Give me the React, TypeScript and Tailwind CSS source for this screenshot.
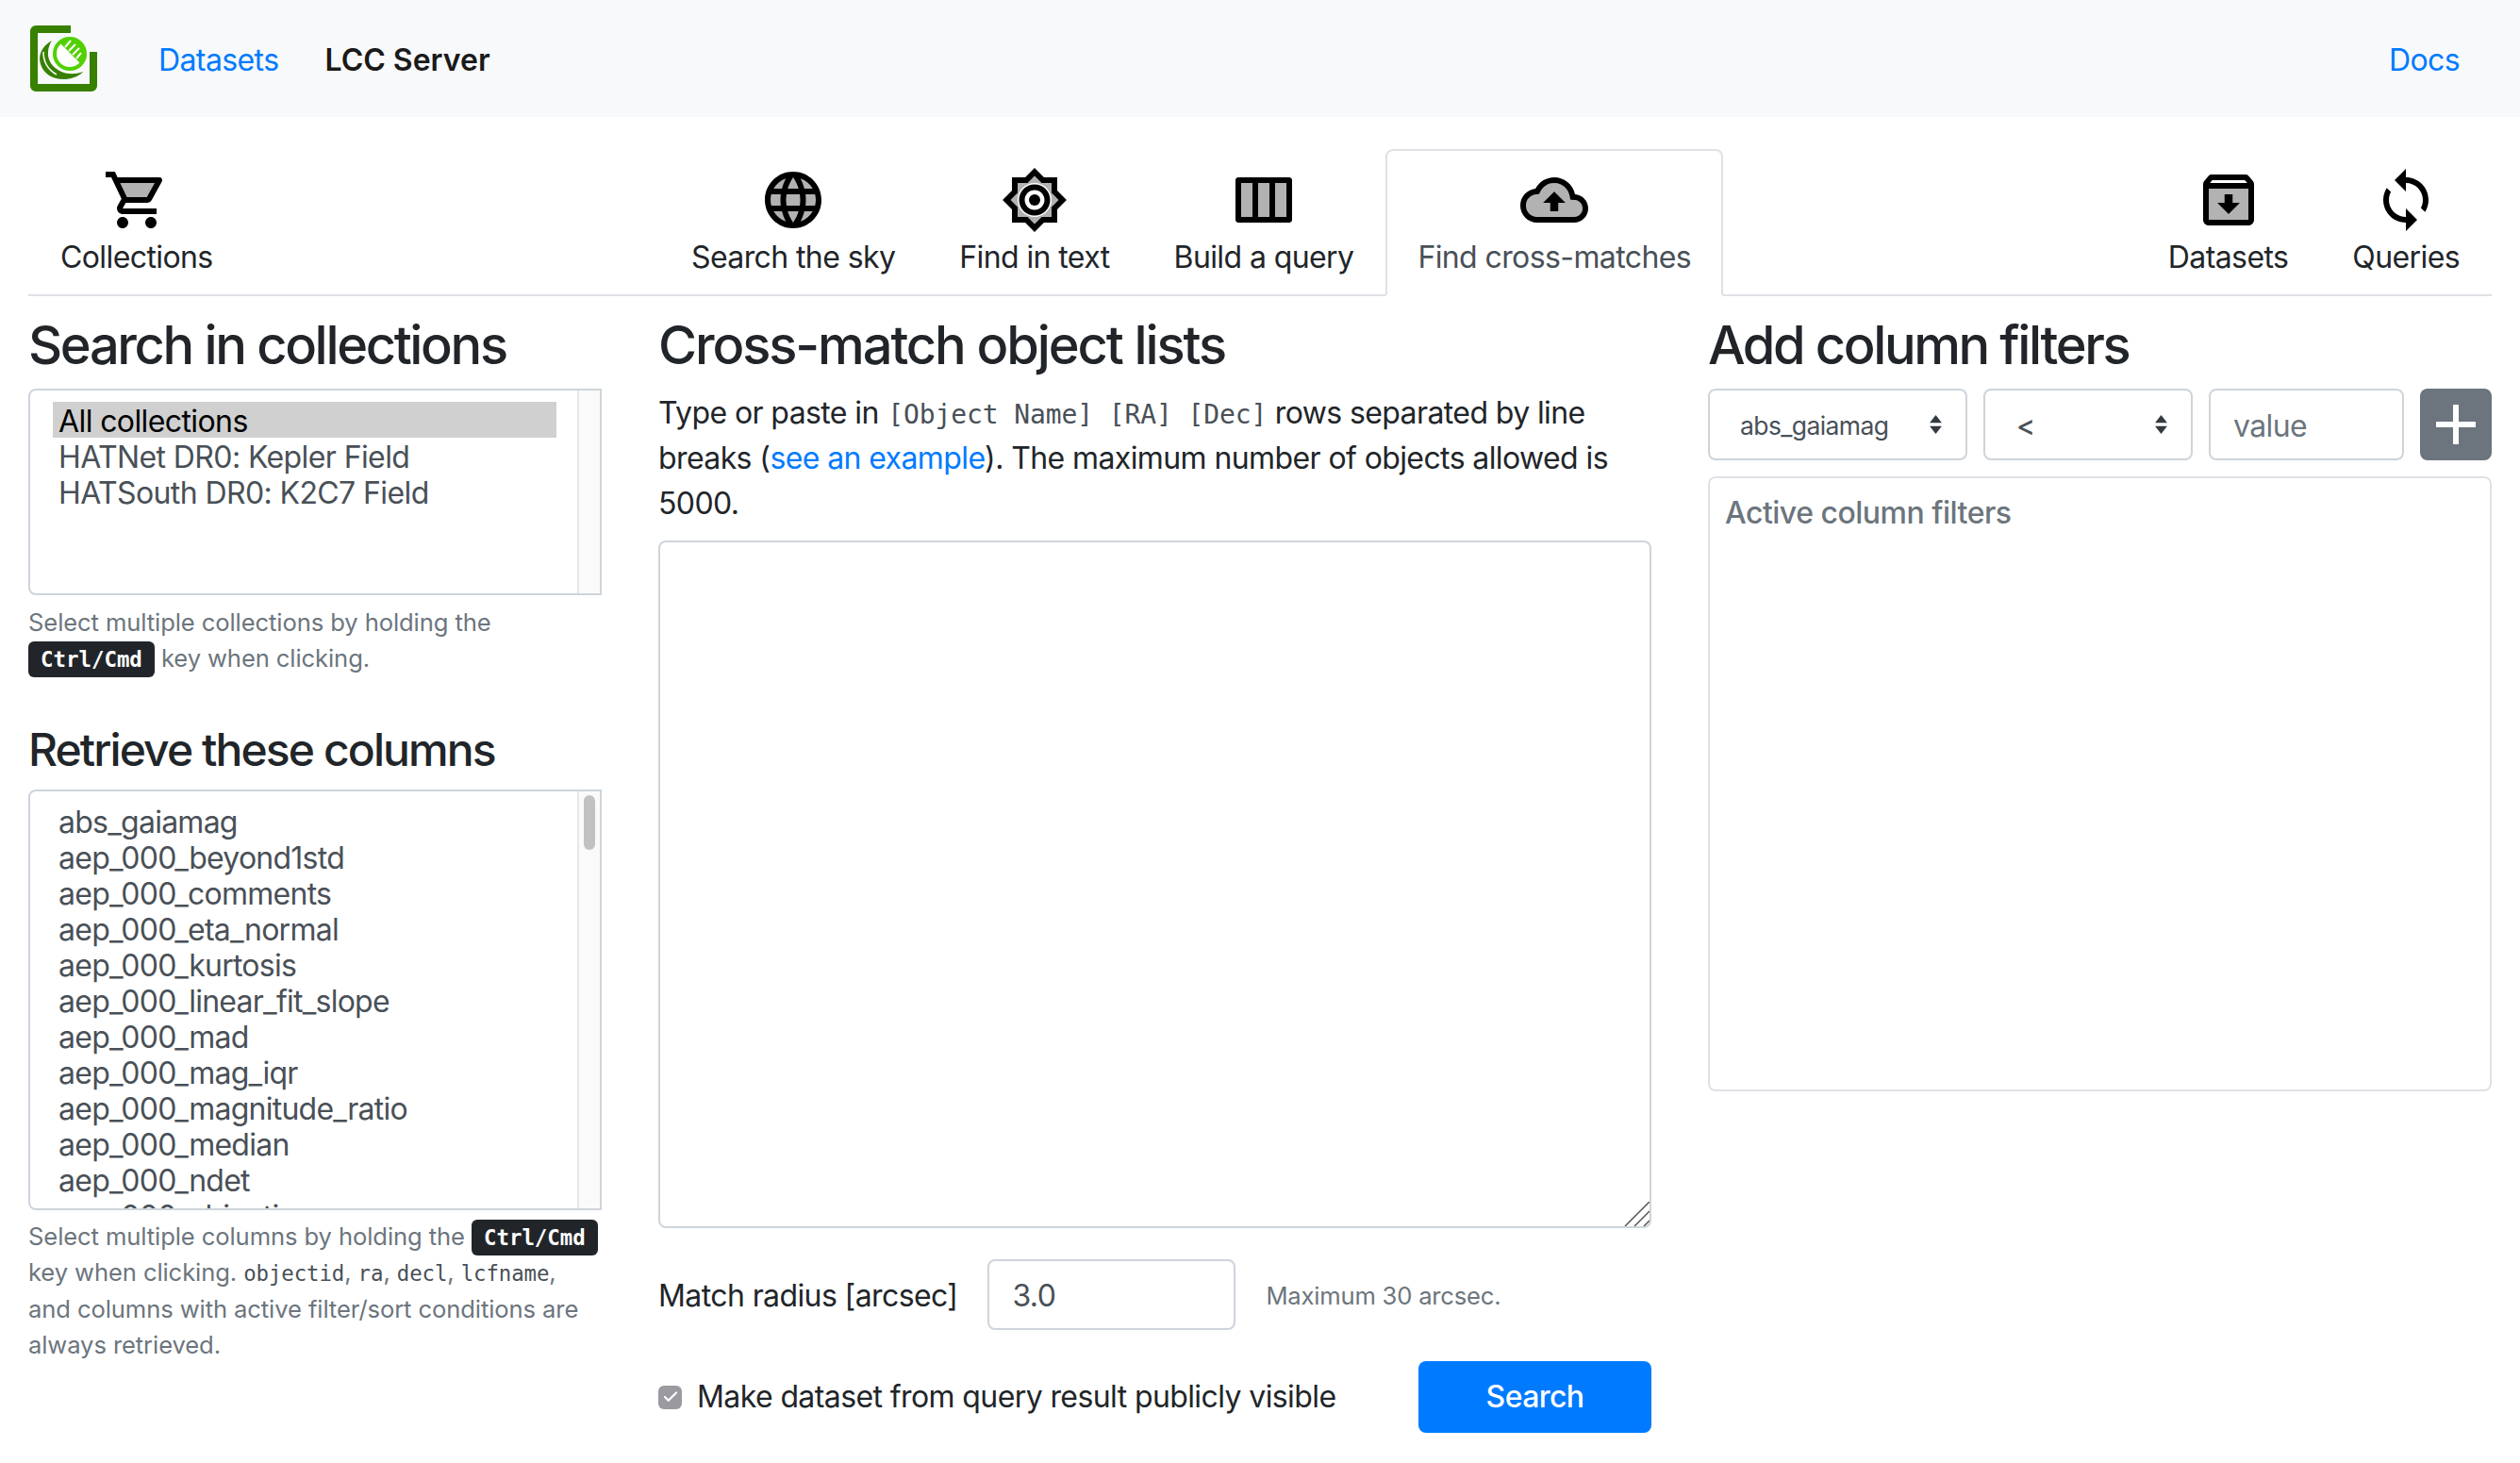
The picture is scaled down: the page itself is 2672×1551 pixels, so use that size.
import { Check } from 'lucide-react';
import type { ReactNode } from 'react';

const columns = [
  'abs_gaiamag',
  'aep_000_beyond1std',
  'aep_000_comments',
  'aep_000_eta_normal',
  'aep_000_kurtosis',
  'aep_000_linear_fit_slope',
  'aep_000_mad',
  'aep_000_mag_iqr',
  'aep_000_magnitude_ratio',
  'aep_000_median',
  'aep_000_ndet',
  'aep_000_objective',
];

function Icon({ children }: { children: ReactNode }) {
  return (
    <svg viewBox="0 0 24 24" className="w-[72px] h-[72px] mx-auto" fill="#000">
      {children}
    </svg>
  );
}

const CartIcon = (
  <Icon>
    <path d="M15.55 11l2.76-5H6.16l2.37 5z" opacity=".3" />
    <path d="M15.55 13c.75 0 1.41-.41 1.75-1.03l3.58-6.49A.996.996 0 0020.01 4H5.21l-.94-2H1v2h2l3.6 7.59-1.35 2.44C4.52 15.37 5.48 17 7 17h12v-2H7l1.1-2h7.45zM6.16 6h12.15l-2.76 5H8.53L6.16 6zM7 18c-1.1 0-1.99.9-1.99 2S5.9 22 7 22s2-.9 2-2-.9-2-2-2zm10 0c-1.1 0-1.99.9-1.99 2s.89 2 1.99 2 2-.9 2-2-.9-2-2-2z" />
  </Icon>
);

const GlobeIcon = (
  <Icon>
    <circle cx="12" cy="12" r="9" opacity=".3" />
    <path d="M11.99 2C6.47 2 2 6.48 2 12s4.47 10 9.99 10C17.52 22 22 17.52 22 12S17.52 2 11.99 2zm6.93 6h-2.95c-.32-1.25-.78-2.45-1.38-3.56 1.84.63 3.37 1.91 4.33 3.56zM12 4.04c.83 1.2 1.48 2.53 1.91 3.96h-3.82c.43-1.43 1.08-2.76 1.91-3.96zM4.26 14C4.1 13.36 4 12.69 4 12s.1-1.36.26-2h3.38c-.08.66-.14 1.32-.14 2 0 .68.06 1.34.14 2H4.26zm.82 2h2.95c.32 1.25.78 2.45 1.38 3.56-1.84-.63-3.37-1.9-4.33-3.56zm2.95-8H5.08c.96-1.66 2.49-2.93 4.33-3.56C8.81 5.55 8.35 6.75 8.03 8zM12 19.96c-.83-1.2-1.48-2.53-1.91-3.96h3.82c-.43 1.43-1.08 2.76-1.91 3.96zM14.34 14H9.66c-.09-.66-.16-1.32-.16-2 0-.68.07-1.35.16-2h4.68c.09.65.16 1.32.16 2 0 .68-.07 1.34-.16 2zm.25 5.56c.6-1.11 1.06-2.31 1.38-3.56h2.95c-.96 1.65-2.49 2.93-4.33 3.56zM16.36 14c.08-.66.14-1.32.14-2 0-.68-.06-1.34-.14-2h3.38c.16.64.26 1.31.26 2s-.1 1.36-.26 2h-3.38z" />
  </Icon>
);

const BrightnessIcon = (
  <Icon>
    <path
      d="M18 9.52V6h-3.52L12 3.52 9.52 6H6v3.52L3.52 12 6 14.48V18h3.52L12 20.48 14.48 18H18v-3.48L20.48 12 18 9.52zM12 18c-3.31 0-6-2.69-6-6s2.69-6 6-6 6 2.69 6 6-2.69 6-6 6z"
      opacity=".3"
    />
    <path d="M20 8.69V4h-4.69L12 .69 8.69 4H4v4.69L.69 12 4 15.31V20h4.69L12 23.31 15.31 20H20v-4.69L23.31 12 20 8.69zm-2 5.79V18h-3.52L12 20.48 9.52 18H6v-3.52L3.52 12 6 9.52V6h3.52L12 3.52 14.48 6H18v3.52L20.48 12 18 14.48zM12 6.5c-3.03 0-5.5 2.47-5.5 5.5s2.47 5.5 5.5 5.5 5.5-2.47 5.5-5.5-2.47-5.5-5.5-5.5zm0 9c-1.93 0-3.5-1.57-3.5-3.5s1.57-3.5 3.5-3.5 3.5 1.57 3.5 3.5-1.57 3.5-3.5 3.5z" />
    <circle cx="12" cy="12" r="2" />
  </Icon>
);

const ColumnsIcon = (
  <Icon>
    <path d="M4 6h4v12H4zM10 6h4v12h-4zM16 6h4v12h-4z" opacity=".3" />
    <path d="M21 4H3c-.55 0-1 .45-1 1v14c0 .55.45 1 1 1h18c.55 0 1-.45 1-1V5c0-.55-.45-1-1-1zM8 18H4V6h4v12zm6 0h-4V6h4v12zm6 0h-4V6h4v12z" />
  </Icon>
);

const CloudIcon = (
  <Icon>
    <path
      d="M19.21 12.04l-1.53-.11-.3-1.5C16.88 7.86 14.62 6 12 6 9.94 6 8.08 7.14 7.12 8.96l-.5.95-1.07.11C3.53 10.24 2 11.95 2 14c0 2.21 1.79 4 4 4h13c1.65 0 3-1.35 3-3 0-1.55-1.22-2.86-2.79-2.96zm-5.76.96v3h-2.91v-3H8l4-4 4 4h-2.55z"
      opacity=".3"
    />
    <path d="M19.35 10.04C18.67 6.59 15.64 4 12 4 9.11 4 6.6 5.64 5.35 8.04 2.34 8.36 0 10.91 0 14c0 3.31 2.69 6 6 6h13c2.76 0 5-2.24 5-5 0-2.64-2.05-4.78-4.65-4.96zM19 18H6c-2.21 0-4-1.79-4-4 0-2.05 1.53-3.76 3.56-3.97l1.07-.11.5-.95C8.08 7.14 9.94 6 12 6c2.62 0 4.88 1.86 5.39 4.43l.3 1.5 1.53.11c1.56.1 2.78 1.41 2.78 2.96 0 1.65-1.35 3-3 3zM8 13h2.55v3h2.9v-3H16l-4-4z" />
  </Icon>
);

const ArchiveIcon = (
  <Icon>
    <path d="M5 19h14V8H5v11zm5.55-6v-3h2.91v3H16l-4 4-4-4h2.55z" opacity=".3" />
    <path d="M20.54 5.23l-1.39-1.68C18.88 3.21 18.47 3 18 3H6c-.47 0-.88.21-1.16.55L3.46 5.23C3.17 5.57 3 6.02 3 6.5V19c0 1.1.9 2 2 2h14c1.1 0 2-.9 2-2V6.5c0-.48-.17-.93-.46-1.27zM6.24 5h11.52l.83 1H5.42l.82-1zM5 19V8h14v11H5zm8.45-9h-2.9v3H8l4 4 4-4h-2.55z" />
  </Icon>
);

const SyncIcon = (
  <Icon>
    <path d="M12 4V1L8 5l4 4V6c3.31 0 6 2.69 6 6 0 1.01-.25 1.97-.7 2.8l1.46 1.46C19.54 15.03 20 13.57 20 12c0-4.42-3.58-8-8-8zm0 14c-3.31 0-6-2.69-6-6 0-1.01.25-1.97.7-2.8L5.24 7.74C4.46 8.97 4 10.43 4 12c0 4.42 3.58 8 8 8v3l4-4-4-4v3z" />
  </Icon>
);

function Logo() {
  return (
    <svg viewBox="0 0 71 70" className="w-[71px] h-[70px]">
      {/* bracket */}
      <path d="M43 0H6a6 6 0 0 0-6 6v58a6 6 0 0 0 6 6h59a6 6 0 0 0 6-6V28h-8v34H8V8h35z" fill="#378000" />
      {/* swoosh */}
      <path
        d="M23 16C12 22 8 32 11 41c3 11 15 17 27 16 8-1 15-4 18-8-8 3-16 3-23 0-9-4-15-12-14-21 0-4 2-9 4-12z"
        fill="#378000"
      />
      <path d="M14 28c0 10 5 19 14 24" fill="none" stroke="#fff" strokeWidth="1.5" />
      {/* dish */}
      <circle cx="42" cy="30" r="16" fill="#fff" stroke="#52d000" strokeWidth="4" />
      <path d="M31 18a16 16 0 0 1 23 23z" fill="#52d000" />
      <path d="M37 23l6-7M41 27l7-7M45 31l7-7M49 35l5-6" stroke="#fff" strokeWidth="2" fill="none" />
    </svg>
  );
}

function Tab({ icon, label, active }: { icon: ReactNode; label: string; active?: boolean }) {
  return (
    <div
      className={`px-8 pt-4 pb-4 border-2 rounded-t-lg -mb-0.5 text-center ${
        active ? 'bg-white border-[#dee2e6] border-b-white text-[#495057]' : 'border-transparent text-[#212529]'
      }`}
    >
      {icon}
      <div className="h-12 leading-[50px] whitespace-nowrap">{label}</div>
    </div>
  );
}

function Kbd({ children }: { children: ReactNode }) {
  return (
    <kbd className="bg-[#212529] text-white rounded-[6px] px-[13px] py-[6px] text-[22.4px] leading-none tracking-normal font-bold font-['DejaVu_Sans_Mono',monospace]">
      {children}
    </kbd>
  );
}

function Mono({ children }: { children: ReactNode }) {
  return (
    <code className="text-[22.4px] leading-none tracking-[-0.1px] text-[#495057] font-['DejaVu_Sans_Mono',monospace]">
      {children}
    </code>
  );
}

function Arrows() {
  return (
    <svg viewBox="0 0 16 24" className="w-[17px] h-[22px] shrink-0" fill="#343a40">
      <path d="M8 1l7 9H1zM8 23l7-9H1z" />
    </svg>
  );
}

function Scrollbar({ thumb }: { thumb?: boolean }) {
  return (
    <div className="w-6 shrink-0 bg-[#fafafa] border-l-2 border-[#e8e8e8] pt-1 pl-[5px]">
      {thumb && <div className="w-3 h-[58px] rounded-md bg-[#c1c1c1]" />}
    </div>
  );
}

export default function App() {
  return (
    <div className="min-h-[1551px] bg-white text-[32px] leading-12 tracking-[-0.6px] text-[#212529] font-['Inter','Liberation_Sans',sans-serif]">
      {/* Navbar */}
      <nav className="h-[124px] bg-[#f8f9fa] flex items-center pl-[32px] pr-[64px]">
        <Logo />
        <a className="ml-[65px] pt-[3px] text-[#007bff]">Datasets</a>
        <a className="ml-[49px] pt-[3px] font-semibold tracking-normal text-[#1a1a1a]">LCC Server</a>
        <a className="ml-auto pt-[3px] text-[#007bff]">Docs</a>
      </nav>

      <div className="px-[30px]">
        {/* Tabs */}
        <div className="mt-[34px] flex border-b-2 border-[#dee2e6]">
          <div className="w-[669px]">
            <div className="inline-block">
              <Tab icon={CartIcon} label="Collections" />
            </div>
          </div>
          <div className="flex">
            <Tab icon={GlobeIcon} label="Search the sky" />
            <Tab icon={BrightnessIcon} label="Find in text" />
            <Tab icon={ColumnsIcon} label="Build a query" />
            <Tab icon={CloudIcon} label="Find cross-matches" active />
          </div>
          <div className="flex ml-auto">
            <Tab icon={ArchiveIcon} label="Datasets" />
            <Tab icon={SyncIcon} label="Queries" />
          </div>
        </div>

        {/* Main columns */}
        <div className="grid grid-cols-[608px_1053px_831px] gap-x-[60px] pt-[19px]">
          <div>
            <h3 className="text-[56px] leading-[67px] font-medium tracking-[-2.35px]">Search in collections</h3>
            <div className="mt-3 h-[219px] flex border-2 border-[#ced4da] rounded-l-lg overflow-hidden">
              <div className="flex-1 pt-3 pl-[24px] pr-[22px] text-[#495057] leading-[38px]">
                <div className="bg-[#d0d0d0] text-black px-[6px] h-[38px] leading-[42px]">All collections</div>
                <div className="px-[6px] h-[38px] leading-[42px]">HATNet DR0: Kepler Field</div>
                <div className="px-[6px] h-[38px] leading-[42px]">HATSouth DR0: K2C7 Field</div>
              </div>
              <Scrollbar />
            </div>
            <p className="mt-[10px] text-[25.6px] leading-[38.4px] tracking-[-0.1px] text-[#6c757d]">
              Select multiple collections by holding the <Kbd>Ctrl/Cmd</Kbd> key when clicking.
            </p>

            <h4 className="mt-12 text-[48px] leading-[58px] font-medium tracking-[-1.9px]">
              Retrieve these columns
            </h4>
            <div className="mt-[13px] h-[446px] flex border-2 border-[#ced4da] rounded-l-lg overflow-hidden">
              <div className="flex-1 pt-[14px] pl-[30px] text-[#495057] leading-[38px] tracking-[-0.75px] overflow-hidden">
                {columns.map((c) => (
                  <div key={c}>{c}</div>
                ))}
              </div>
              <Scrollbar thumb />
            </div>
            <p className="mt-[9px] text-[25.6px] leading-[38.4px] tracking-[-0.1px] text-[#6c757d]">
              Select multiple columns by holding the <Kbd>Ctrl/Cmd</Kbd> key when clicking.{' '}
              <Mono>objectid</Mono>, <Mono>ra</Mono>, <Mono>decl</Mono>, <Mono>lcfname</Mono>, and columns with
              active filter/sort conditions are always retrieved.
            </p>
          </div>

          <div>
            <h3 className="text-[56px] leading-[67px] font-medium tracking-[-2.1px]">Cross-match object lists</h3>
            <p className="mt-[14px]">
              Type or paste in{' '}
              <code className="ml-px text-[28px] leading-none tracking-[-0.1px] text-[#495057] font-['DejaVu_Sans_Mono',monospace]">
                [Object Name] [RA] [Dec]
              </code>{' '}
              rows separated by line breaks (<a className="text-[#007bff]">see an example</a>). The maximum number of
              objects allowed is 5000.
            </p>
            <div className="relative mt-[15px]">
              <textarea className="block w-full h-[729px] border-2 border-[#ced4da] rounded-lg resize-none" />
              <svg viewBox="0 0 28 26" className="absolute right-[2px] bottom-[2px] w-[28px] h-[26px]" stroke="#555" strokeWidth="1.5">
                <path d="M2 26L28 0M12 26L28 10M22 26l6-6" />
              </svg>
            </div>
            <div className="mt-[33px] flex items-center">
              <label className="pt-[2px]">Match radius [arcsec]</label>
              <input
                defaultValue="3.0"
                className="ml-[32px] w-[263px] h-[75px] px-6 pt-[2px] border-2 border-[#ced4da] rounded-lg text-[#495057]"
              />
              <span className="ml-8 pt-[2px] text-[25.6px] tracking-[-0.2px] text-[#6c757d]">Maximum 30 arcsec.</span>
            </div>
            <div className="mt-[33px] flex items-center justify-between">
              <label className="flex items-center">
                <span className="w-[25px] h-[25px] rounded-[6px] bg-[#9a9aa0] flex items-center justify-center">
                  <Check className="w-[18px] h-[18px] text-white" strokeWidth={3} />
                </span>
                <span className="ml-4">Make dataset from query result publicly visible</span>
              </label>
              <button className="w-[247px] h-[76px] rounded-lg bg-[#007bff] text-white font-medium">Search</button>
            </div>
          </div>

          <div>
            <h3 className="text-[56px] leading-[67px] font-medium tracking-[-2.4px]">Add column filters</h3>
            <div className="mt-3 flex gap-[17px]">
              <div className="w-[275px] h-[76px] border-2 border-[#ced4da] rounded-lg flex items-center justify-between pl-[32px] pr-[23px] text-[26.5px] text-[#495057]">
                <span className="pt-[2px]">abs_gaiamag</span>
                <Arrows />
              </div>
              <div className="w-[222px] h-[76px] border-2 border-[#ced4da] rounded-lg flex items-center justify-between pl-[33px] pr-[23px] text-[30px] font-medium text-[#495057]">
                <span className="pt-[2px]">&lt;</span>
                <Arrows />
              </div>
              <input
                placeholder="value"
                className="w-[207px] h-[76px] px-6 pt-[2px] border-2 border-[#ced4da] rounded-lg placeholder:text-[#6c757d]"
              />
              <button className="w-[76px] h-[76px] rounded-lg bg-[#6c757d] flex items-center justify-center">
                <svg viewBox="0 0 42 42" className="w-[42px] h-[42px]" fill="#fff">
                  <path d="M18 0h6v18h18v6H24v18h-6V24H0v-6h18z" />
                </svg>
              </button>
            </div>
            <div className="mt-[17px] h-[652px] border-2 border-[#dee2e6] rounded-lg px-4 pt-[13px] font-medium tracking-[-0.5px] text-[#6c757d]">
              Active column filters
            </div>
          </div>
        </div>
      </div>
    </div>
  );
}
